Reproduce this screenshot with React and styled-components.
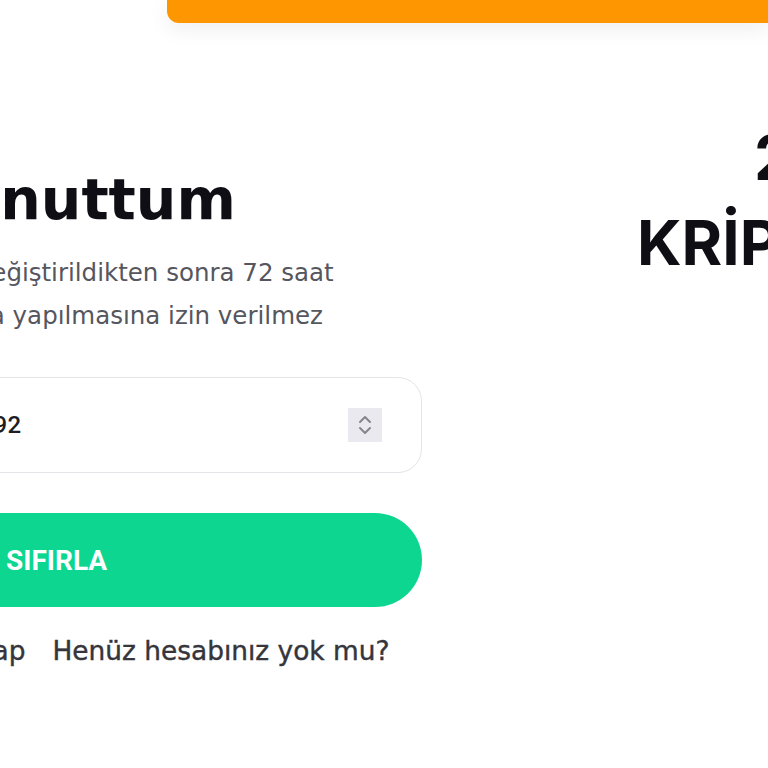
import React from 'react';
import styled, { createGlobalStyle } from 'styled-components';

const GlobalStyle = createGlobalStyle`
  html, body {
    margin: 0;
    padding: 0;
    background: #ffffff;
  }
  body {
    font-family: "DejaVu Sans", "Noto Sans", sans-serif;
  }
`;

const Page = styled.div`
  position: relative;
  width: 768px;
  height: 768px;
  overflow: hidden;
  background: #ffffff;
`;

const TopBar = styled.div`
  margin-left: 167px;
  height: 23px;
  background: #fd9600;
  border-bottom-left-radius: 12px;
  box-shadow: 0 6px 22px rgba(0, 0, 0, 0.07);
`;

const Main = styled.div`
  display: flex;
  align-items: flex-start;
  margin-left: -297px;
`;

const FormColumn = styled.div`
  width: 719px;
  flex-shrink: 0;
  padding-top: 140px;
  display: flex;
  flex-direction: column;
`;

const Heading = styled.h1`
  margin: 0;
  font-size: 57px;
  line-height: 72px;
  font-weight: 700;
  color: #0e0e14;
  white-space: nowrap;
`;

const Note = styled.p`
  margin: 16px 0 0;
  font-size: 24.5px;
  line-height: 43px;
  color: #56565e;
  white-space: nowrap;
`;

const NoteLine = styled.span`
  display: block;
  margin-left: ${p => p.$shift}px;
`;

const NumberField = styled.div`
  margin-top: 40px;
  height: 96px;
  box-sizing: border-box;
  border: 1px solid #e4e4e8;
  border-radius: 24px;
  display: flex;
  align-items: center;
  justify-content: space-between;
  padding: 0 39px 0 ${p => p.$indent}px;
`;

const FieldValue = styled.span`
  font-family: Roboto, "Liberation Sans", sans-serif;
  font-size: 24px;
  font-weight: 500;
  color: #1d1d22;
  letter-spacing: 0.5px;
`;

const Spinner = styled.div`
  width: 34px;
  height: 34px;
  background: #e9e9ef;
  display: flex;
  align-items: center;
  justify-content: center;
`;

const SubmitButton = styled.button`
  margin-top: 40px;
  height: 94px;
  border: none;
  border-radius: 47px;
  background: #0cd68f;
  color: #ffffff;
  font-family: Roboto, "Liberation Sans", sans-serif;
  font-size: 28px;
  font-weight: 700;
  text-align: left;
  padding: 0 0 0 ${p => p.$indent}px;
  cursor: pointer;
`;

const Links = styled.div`
  margin-top: 28px;
  display: flex;
  gap: 27px;
  padding-left: ${p => p.$indent}px;
  font-size: 26.4px;
  font-weight: 400;
  color: #35353b;
  white-space: nowrap;
  -webkit-text-stroke: 0.4px #35353b;
`;

const PromoColumn = styled.div`
  margin-left: 215px;
  padding-top: 92px;
  flex-shrink: 0;
`;

const PromoTitle = styled.h2`
  margin: 0;
  font-family: Inter, "Noto Sans", sans-serif;
  font-size: 62px;
  line-height: 85px;
  font-weight: 700;
  color: #0e0e14;
  white-space: nowrap;
`;

const PromoLine = styled.span`
  display: block;
  padding-left: ${p => p.$indent || 0}px;
`;

const SpinIcon = () => (
  <svg width="18" height="24" viewBox="0 0 18 24" fill="none">
    <path d="M4 9l5-5 5 5M4 15l5 5 5-5" stroke="#85858d" strokeWidth="2" strokeLinecap="round" strokeLinejoin="round" />
  </svg>
);

export default function App() {
  return (
    <Page>
      <GlobalStyle />
      <TopBar />
      <Main>
        <FormColumn>
          <Heading>Şifremi Unuttum</Heading>
          <Note>
            <NoteLine $shift={-32}>Güvenliğiniz için şifreniz değiştirildikten sonra 72 saat</NoteLine>
            <NoteLine $shift={-36}>boyunca hesabınızdan para yapılmasına izin verilmez</NoteLine>
          </Note>
          <NumberField $indent={148}>
            <FieldValue>905321234592</FieldValue>
            <Spinner>
              <SpinIcon />
            </Spinner>
          </NumberField>
          <SubmitButton $indent={196}>ŞİFREYİ SIFIRLA</SubmitButton>
          <Links $indent={209}>
            <span>Giriş Yap</span>
            <span>Henüz hesabınız yok mu?</span>
          </Links>
        </FormColumn>
        <PromoColumn>
          <PromoTitle>
            <PromoLine $indent={117}>2024'ÜN EN İYİ</PromoLine>
            <PromoLine>KRİPTO BORSASI</PromoLine>
          </PromoTitle>
        </PromoColumn>
      </Main>
    </Page>
  );
}
